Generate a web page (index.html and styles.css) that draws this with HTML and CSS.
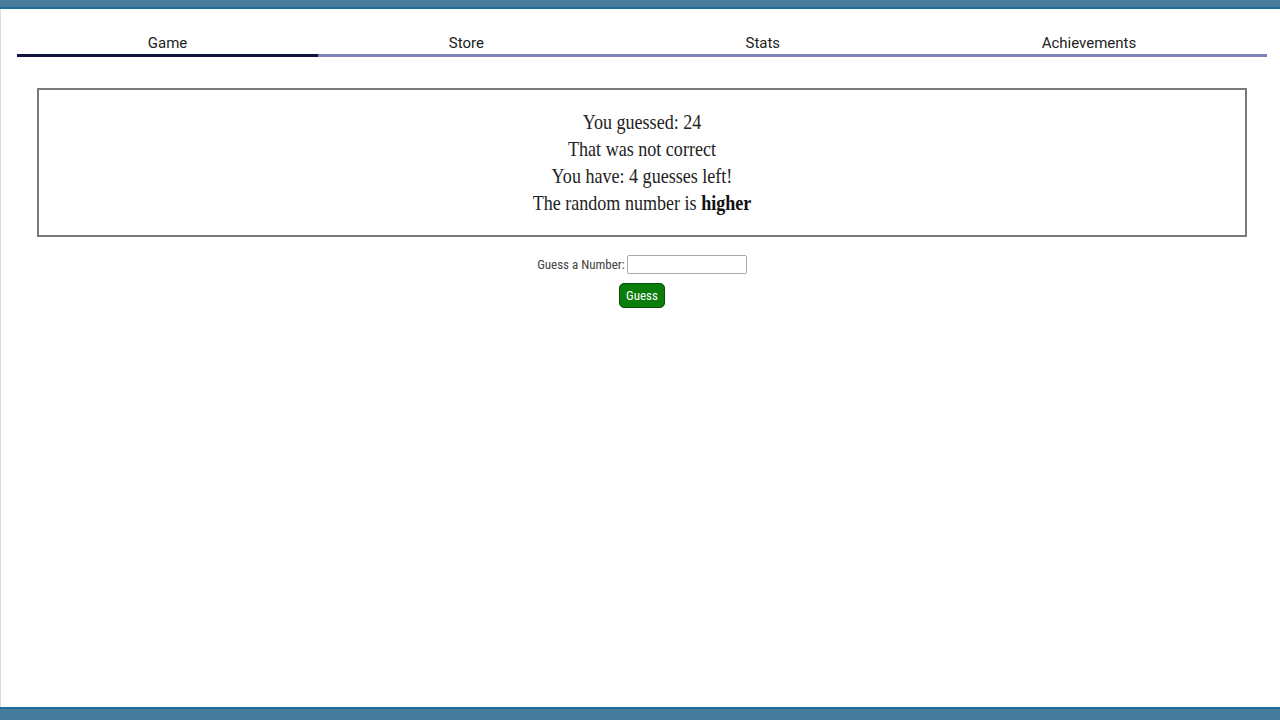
FILE: index.html
```html
<!DOCTYPE html>
<html>
<head>
<meta charset="utf-8">
<link rel="stylesheet" href="styles.css">
</head>
<body>
<div class="topbar"></div>
<main class="page">
  <nav class="tabs">
    <div class="tab active">Game</div>
    <div class="tab">Store</div>
    <div class="tab">Stats</div>
    <div class="tab">Achievements</div>
  </nav>
  <section class="result">
    <div class="result-text">
      <div>You guessed: 24</div>
      <div>That was not correct</div>
      <div>You have: 4 guesses left!</div>
      <div>The random number is <b>higher</b></div>
    </div>
  </section>
  <form class="guess-form">
    <div class="row">
      <label class="label" for="g">Guess a Number:</label>
      <input id="g" class="input" type="text">
    </div>
    <button type="button" class="btn">Guess</button>
  </form>
</main>
<div class="bottombar"></div>
</body>
</html>
```
FILE: styles.css
```css
html, body { margin: 0; padding: 0; height: 100%; }
body {
  background: #fff;
  display: flex;
  flex-direction: column;
  height: 720px;
  overflow: hidden;
  font-family: "Liberation Serif", serif;
}
.topbar {
  height: 7px;
  background: #477c9c;
  border-bottom: 2px solid #1f6d9a;
  flex: none;
}
.bottombar {
  height: 11px;
  background: #477c9c;
  border-top: 2px solid #1f6d9a;
  flex: none;
}
.page {
  flex: 1;
  padding: 0 13px 0 16px;
  border-left: 1px solid #ddd;
}
.tabs {
  display: flex;
  margin-top: 25px;
}
.tab {
  flex: 1 1 auto;
  text-align: center;
  font-family: Roboto, "Noto Sans", sans-serif;
  font-size: 15px;
  color: #222;
  padding-bottom: 2px;
  border-bottom: 3px solid #7e80b8;
  line-height: 18px;
}
.tab.active { border-bottom-color: #12123e; }
.result {
  margin: 31px 20px 0 20px;
  border: 2px solid #7a7a7a;
  padding: 19px 0 18px;
  text-align: center;
  font-size: 21px;
  line-height: 27px;
  color: #222;
}
.result-text { transform: scaleX(0.86); }
.result b { color: #111; }
.guess-form {
  display: flex;
  flex-direction: column;
  align-items: center;
  margin-top: 18px;
}
.row { display: flex; align-items: center; gap: 2px; }
.label {
  font-family: "Roboto Condensed", "Liberation Sans", sans-serif;
  font-size: 13px;
  color: #444;
}
.input {
  width: 116px;
  height: 15px;
  border: 1px solid #aaa;
  border-radius: 2px;
  padding: 1px;
}
.btn {
  margin-top: 9px;
  background: #0a7d0a;
  color: #fff;
  border: 1px solid #064d06;
  border-radius: 5px;
  font-family: "Roboto Condensed", "Liberation Sans", sans-serif;
  font-size: 13px;
  height: 25px;
  padding: 0 6px;
}
```
